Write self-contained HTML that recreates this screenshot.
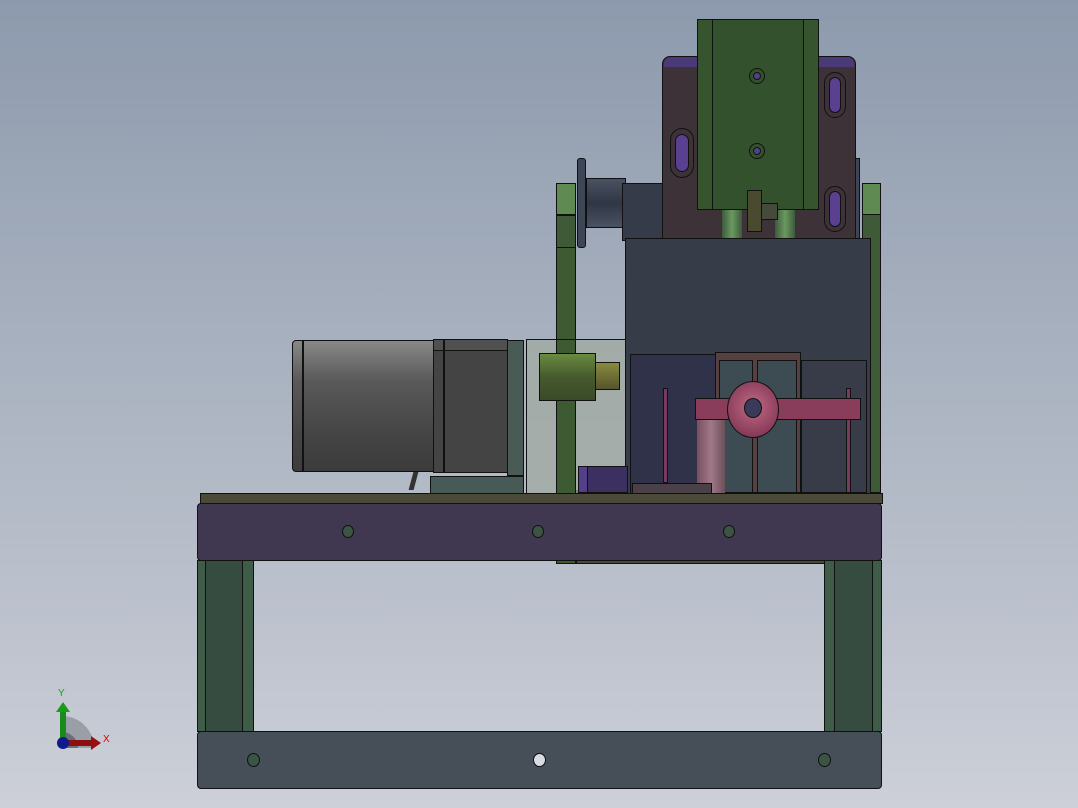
<!DOCTYPE html>
<html><head><style>
body{margin:0;width:1078px;height:808px;overflow:hidden;background:linear-gradient(#8d9aad 0%,#a9b2c0 45%,#bfc4cf 80%,#cdd0d8 100%);position:relative;font-family:"Liberation Sans",sans-serif}
div{position:absolute;box-sizing:border-box}
.b{border:1px solid #111}
.h{border-radius:50%;border:1px solid #111;background:#3b5545}
</style></head><body>
<div class="b" style="left:556px;top:183px;width:20px;height:381px;background:#3e5a32"></div>
<div class="b" style="left:576px;top:490px;width:250px;height:74px;background:#4a4a38"></div>
<div class="b" style="left:862px;top:183px;width:19px;height:310px;background:#3e5a36"></div>
<div class="b" style="left:556px;top:183px;width:20px;height:32px;background:#5f8a52"></div>
<div class="b" style="left:556px;top:215px;width:20px;height:33px;background:#3e5a36"></div>
<div class="b" style="left:862px;top:183px;width:19px;height:32px;background:#5f8a52"></div>
<div class="b" style="left:577px;top:158px;width:9px;height:90px;background:#3e4656;border-radius:3px"></div>
<div class="b" style="left:586px;top:178px;width:40px;height:50px;background:linear-gradient(#4a5263,#2f3644 50%,#4a5263)"></div>
<div class="b" style="left:622px;top:183px;width:42px;height:58px;background:#353b48"></div>
<div class="b" style="left:852px;top:158px;width:8px;height:82px;background:#3e4656"></div>
<div class="b" style="left:662px;top:56px;width:194px;height:184px;background:#3d3238;border-radius:8px 8px 0 0"></div>
<div style="left:664px;top:57px;width:190px;height:10px;background:#4a3a78;border-radius:7px 7px 0 0"></div>
<div class="b" style="left:670px;top:128px;width:24px;height:50px;border-radius:12px;background:#3d3238"></div>
<div class="b" style="left:675px;top:134px;width:14px;height:38px;border-radius:7px;background:#5a4090"></div>
<div class="b" style="left:824px;top:72px;width:22px;height:46px;border-radius:11px;background:#3d3238"></div>
<div class="b" style="left:829px;top:77px;width:12px;height:36px;border-radius:6px;background:#5a4090"></div>
<div class="b" style="left:824px;top:186px;width:22px;height:46px;border-radius:11px;background:#3d3238"></div>
<div class="b" style="left:829px;top:191px;width:12px;height:36px;border-radius:6px;background:#5a4090"></div>
<div style="left:722px;top:208px;width:20px;height:32px;background:linear-gradient(90deg,#3d5a3c,#6a9a60,#3d5a3c)"></div>
<div style="left:775px;top:208px;width:20px;height:32px;background:linear-gradient(90deg,#3d5a3c,#6a9a60,#3d5a3c)"></div>
<div class="b" style="left:697px;top:19px;width:122px;height:191px;background:#33512d"></div>
<div class="b" style="left:697px;top:19px;width:16px;height:191px;background:#36552f"></div>
<div class="b" style="left:803px;top:19px;width:16px;height:191px;background:#36552f"></div>
<div class="b" style="left:749px;top:68px;width:16px;height:16px;border-radius:50%;background:#33512d"></div>
<div class="b" style="left:753px;top:72px;width:8px;height:8px;border-radius:50%;background:#54408a"></div>
<div class="b" style="left:749px;top:143px;width:16px;height:16px;border-radius:50%;background:#33512d"></div>
<div class="b" style="left:753px;top:147px;width:8px;height:8px;border-radius:50%;background:#54408a"></div>
<div class="b" style="left:747px;top:190px;width:15px;height:42px;background:#4a4a30"></div>
<div class="b" style="left:761px;top:203px;width:17px;height:17px;background:#454a3a"></div>
<div class="b" style="left:625px;top:238px;width:246px;height:256px;background:#363d48"></div>
<div class="b" style="left:630px;top:354px;width:86px;height:140px;background:#30324a"></div>
<div class="b" style="left:715px;top:352px;width:86px;height:141px;background:#574040"></div>
<div class="b" style="left:719px;top:360px;width:34px;height:133px;background:#3c4c52"></div>
<div class="b" style="left:757px;top:360px;width:40px;height:133px;background:#3c4c52"></div>
<div class="b" style="left:801px;top:360px;width:66px;height:133px;background:#373c48"></div>
<div style="left:697px;top:420px;width:28px;height:73px;background:linear-gradient(90deg,#7a5060,#a07888,#6a5058)"></div>
<div class="b" style="left:663px;top:388px;width:5px;height:95px;background:#7a3a60"></div>
<div class="b" style="left:846px;top:388px;width:5px;height:105px;background:#7a3a60"></div>
<div class="b" style="left:632px;top:483px;width:80px;height:11px;background:#4a4048"></div>
<div class="b" style="left:695px;top:398px;width:166px;height:22px;background:#8a3d5a"></div>
<div class="b" style="left:727px;top:381px;width:52px;height:57px;border-radius:50%;background:radial-gradient(circle at 50% 45%,#c06a85,#8a3d5a 70%,#6a2c44)"></div>
<div class="b" style="left:744px;top:398px;width:18px;height:20px;border-radius:50%;background:#3a3a5a"></div>
<div class="b" style="left:526px;top:339px;width:100px;height:155px;background:rgba(160,170,160,0.75)"></div>
<div class="b" style="left:556px;top:339px;width:20px;height:155px;background:#3e5a32"></div>
<div class="b" style="left:590px;top:362px;width:30px;height:28px;background:linear-gradient(#8a8a40,#55552c)"></div>
<div class="b" style="left:539px;top:353px;width:57px;height:48px;background:linear-gradient(#6a8a40,#465a2e 50%,#3a4a28)"></div>
<div class="b" style="left:578px;top:466px;width:50px;height:27px;background:#3c3060"></div>
<div class="b" style="left:578px;top:466px;width:10px;height:27px;background:#54408a"></div>
<div class="b" style="left:292px;top:340px;width:142px;height:132px;background:linear-gradient(#888 0%,#5a5a5a 30%,#454545 70%,#3c3c3c);border-radius:4px 0 0 4px"></div>
<div class="b" style="left:302px;top:340px;width:2px;height:132px;background:#333"></div>
<div class="b" style="left:433px;top:339px;width:75px;height:134px;background:#444"></div>
<div class="b" style="left:433px;top:339px;width:75px;height:12px;background:#505050"></div>
<div class="b" style="left:443px;top:339px;width:1px;height:134px"></div>
<div class="b" style="left:507px;top:340px;width:17px;height:136px;background:#4a5a55"></div>
<div class="b" style="left:430px;top:476px;width:94px;height:18px;background:#485a55"></div>
<div style="left:411px;top:472px;width:5px;height:18px;background:#333;transform:skewX(-15deg)"></div>
<div class="b" style="left:200px;top:493px;width:683px;height:11px;background:#4a4a38"></div>
<div class="b" style="left:197px;top:503px;width:685px;height:58px;background:#403750;border-radius:4px"></div>
<div class="h" style="left:342px;top:525px;width:12px;height:13px"></div>
<div class="h" style="left:532px;top:525px;width:12px;height:13px"></div>
<div class="h" style="left:723px;top:525px;width:12px;height:13px"></div>
<div class="b" style="left:197px;top:560px;width:57px;height:172px;background:#3e5c48"></div>
<div class="b" style="left:205px;top:560px;width:38px;height:172px;background:#374c40"></div>
<div class="b" style="left:824px;top:560px;width:58px;height:172px;background:#3e5c48"></div>
<div class="b" style="left:834px;top:560px;width:39px;height:172px;background:#374c40"></div>
<div class="b" style="left:197px;top:731px;width:685px;height:58px;background:#464e58;border-radius:4px"></div>
<div class="h" style="left:247px;top:753px;width:13px;height:14px"></div>
<div class="h" style="left:533px;top:753px;width:13px;height:14px;background:#d8dce2"></div>
<div class="h" style="left:818px;top:753px;width:13px;height:14px"></div>
<div style="left:62px;top:716px;width:32px;height:32px;border-radius:0 32px 0 0;background:#9a9ea6"></div>
<div style="left:62px;top:732px;width:16px;height:16px;border-radius:0 16px 0 0;background:#6a6e76"></div>
<div style="left:60px;top:710px;width:6px;height:34px;background:#1a8a1a"></div>
<div style="left:56px;top:702px;width:0;height:0;border-left:7px solid transparent;border-right:7px solid transparent;border-bottom:10px solid #1a9a1a"></div>
<div style="left:64px;top:740px;width:28px;height:6px;background:#8a1010"></div>
<div style="left:91px;top:736px;width:0;height:0;border-top:7px solid transparent;border-bottom:7px solid transparent;border-left:10px solid #9a1010"></div>
<div style="left:57px;top:737px;width:12px;height:12px;border-radius:50%;background:#101a8a"></div>
<div style="left:58px;top:688px;font-size:10px;color:#1a1">Y</div>
<div style="left:103px;top:734px;font-size:10px;color:#d00">X</div>
</body></html>
